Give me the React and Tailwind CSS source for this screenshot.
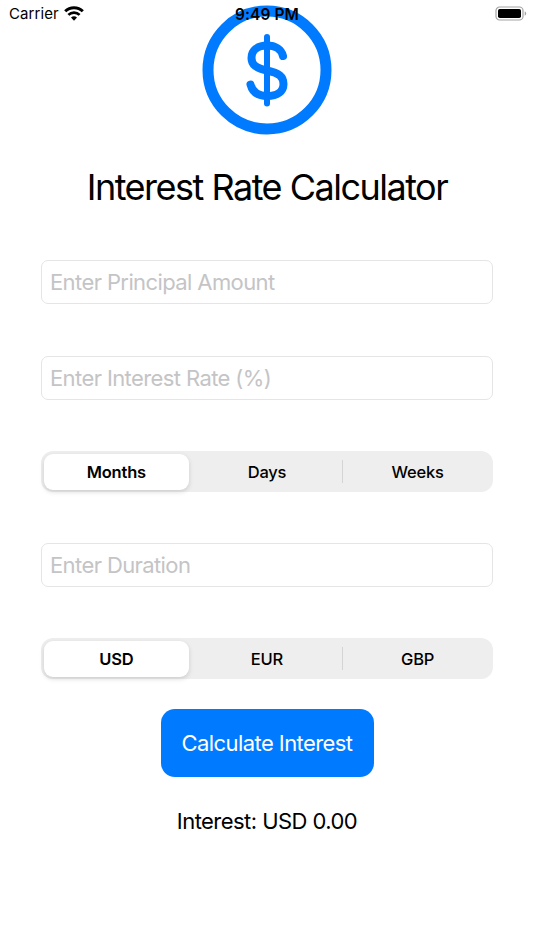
import { useState } from "react";

const PERIODS = ["Months", "Days", "Weeks"];
const CURRENCIES = ["USD", "EUR", "GBP"];

const DAYS_IN = { Months: 30, Days: 1, Weeks: 7 };

const StatusBar = () => (
    <div className="absolute inset-x-0 top-0 h-7 text-black">
        <div className="flex h-full items-center justify-between pl-[9px] pr-[7px]">
            <div className="flex items-center gap-[5px]">
                <span className="text-[15px] leading-7 tracking-[0.1px]">Carrier</span>
                <svg width="20" height="15" viewBox="0 0 20 15" fill="none" stroke="currentColor" className="-mt-[2px]">
                    <path d="M1.200 5.300a12.600 12.600 0 0 1 17.600 0" strokeWidth="3" />
                    <path d="M4.400 8.900a8 8 0 0 1 11.200 0" strokeWidth="2.700" />
                    <path d="M10 14.800 7 11.600a4.300 4.300 0 0 1 6 0Z" fill="currentColor" stroke="none" />
                </svg>
            </div>
            <svg width="32" height="15" viewBox="0 0 32 15" className="-mt-[2px]">
                <rect x="1" y="1" width="27" height="13" rx="3.6" fill="none" stroke="#a3a3a3" strokeWidth="1.2" />
                <rect x="3" y="3" width="23" height="9" rx="1.8" fill="#000" />
                <path d="M29.7 5.4v4.4c1-.4 1.5-1.2 1.5-2.2s-.5-1.8-1.5-2.2Z" fill="#a3a3a3" />
            </svg>
        </div>
        <span className="absolute inset-x-0 top-0 text-center text-[15.5px] font-semibold leading-[29px] tracking-[0.1px]">
            9:49 PM
        </span>
    </div>
);

const DollarIcon = () => (
    <svg width="130" height="130" viewBox="0 0 130 130" fill="none" stroke="#007aff" strokeLinecap="round">
        <circle cx="65" cy="65" r="59" strokeWidth="11" />
        <path d="M65 32v66.500" strokeWidth="6" />
        <path
            d="M81 51C79.500 44.500 73.500 40.500 65 40.500C55.500 40.500 49.500 45.500 49.500 53C49.500 60 54 63 65 65.500C77 68 81.500 71.500 81.500 79C81.500 86.500 75.500 91 65 91C56 91 50.500 87 48.500 79.500"
            strokeWidth="8"
        />
    </svg>
);

const Field = ({ placeholder, value, onChange }) => (
    <input
        type="text"
        placeholder={placeholder}
        value={value}
        onChange={(e) => onChange(e.target.value)}
        className="h-11 w-full rounded-[7px] border border-[#e5e5e5] bg-white px-2 text-[22px] tracking-[-0.6px] text-black outline-none placeholder:text-[#c4c4c6]"
    />
);

const SegmentedControl = ({ options, value, onChange }) => {
    const active = options.indexOf(value);

    return (
        <div className="grid h-[41px] w-full grid-cols-3 rounded-[12px] bg-[#eeeeee]">
            {options.map((option, index) => (
                <div key={option} className="relative flex px-[3px] pb-[2px] pt-[3px]">
                    <button
                        onClick={() => onChange(option)}
                        className={`h-9 flex-1 rounded-[9px] text-[16.5px] tracking-[-0.2px] text-black ${index === active
                            ? "bg-white font-semibold shadow-[0_2px_5px_rgba(0,0,0,0.14)]"
                            : "font-medium"
                            }`}
                    >
                        {option}
                    </button>
                    {/* Divider is hidden next to the active segment */}
                    {index > 0 && index !== active && index - 1 !== active && (
                        <span className="absolute left-0 top-[9px] h-[23px] w-px bg-[#d4d4d6]" />
                    )}
                </div>
            ))}
        </div>
    );
};

export default function App() {
    const [principal, setPrincipal] = useState("");
    const [rate, setRate] = useState("");
    const [duration, setDuration] = useState("");
    const [period, setPeriod] = useState("Months");
    const [currency, setCurrency] = useState("USD");
    const [interest, setInterest] = useState(0);

    const calculate = () => {
        const years = period === "Months"
            ? Number(duration) / 12
            : (Number(duration) * DAYS_IN[period]) / 365;
        const total = (Number(principal) * Number(rate) * years) / 100;
        setInterest(Number.isFinite(total) ? total : 0);
    };

    return (
        <div className="relative flex h-[950px] w-full flex-col items-center overflow-hidden bg-white px-[41px] pt-[5px] font-['Inter',sans-serif]">
            <DollarIcon />
            <h1 className="mt-[31px] whitespace-nowrap text-[36px] leading-[42px] tracking-[-1.5px] text-black">
                Interest Rate Calculator
            </h1>
            <div className="mt-[52px] flex w-full flex-col">
                <Field placeholder="Enter Principal Amount" value={principal} onChange={setPrincipal} />
                <div className="mt-[52px] flex flex-col gap-[51px]">
                    <Field placeholder="Enter Interest Rate (%)" value={rate} onChange={setRate} />
                    <SegmentedControl options={PERIODS} value={period} onChange={setPeriod} />
                    <Field placeholder="Enter Duration" value={duration} onChange={setDuration} />
                    <SegmentedControl options={CURRENCIES} value={currency} onChange={setCurrency} />
                </div>
            </div>
            <button
                onClick={calculate}
                className="mt-[30px] h-[68px] w-[213px] rounded-[14px] bg-[#007aff] pt-px text-[22px] tracking-[-0.57px] text-white"
            >
                Calculate Interest
            </button>
            <p className="mt-[29px] text-[22px] leading-[30px] tracking-[-0.55px] text-black">
                Interest: {currency} {interest.toFixed(2)}
            </p>
            <StatusBar />
        </div>
    );
}
